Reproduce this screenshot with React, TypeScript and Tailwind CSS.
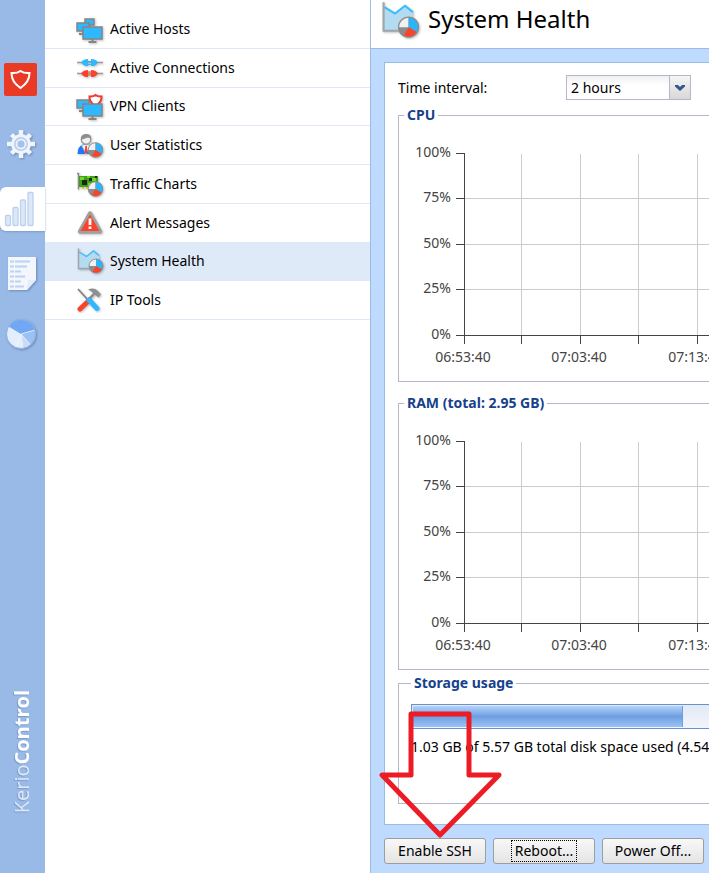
import { ReactNode } from "react";
import clsx from "clsx";

const iconClass = "h-7 w-7 shrink-0 drop-shadow-[1px_1px_1px_rgba(0,0,0,0.25)]";

function Pie({ cx, cy, r }: { cx: number; cy: number; r: number }) {
  const d = r * 0.5;
  const h = r * 0.87;
  return (
    <g>
      <circle cx={cx} cy={cy} r={r} fill="#8c8c8c" />
      <path d={`M${cx} ${cy}L${cx - r} ${cy}A${r} ${r} 0 0 1 ${cx} ${cy - r}Z`} fill="#f1f1f1" />
      <path d={`M${cx} ${cy}L${cx} ${cy - r}A${r} ${r} 0 0 1 ${cx + h} ${cy + d}Z`} fill="#2ab5fb" />
      <path d={`M${cx} ${cy}L${cx + h} ${cy + d}A${r} ${r} 0 0 1 ${cx - d} ${cy + h}Z`} fill="#fb432c" />
      <circle cx={cx} cy={cy} r={r} fill="none" stroke="#8c8c8c" strokeWidth="0.9" />
    </g>
  );
}

function Monitor({ x, y, w, h }: { x: number; y: number; w: number; h: number }) {
  return (
    <g>
      <path d={`M${x + w / 2} ${y + h}v3m-4 0h8`} stroke="#858585" strokeWidth="2" />
      <rect x={x} y={y} width={w} height={h} fill="#2db8ff" stroke="#858585" strokeWidth="1.5" />
    </g>
  );
}

function HostsIcon() {
  return (
    <svg viewBox="0 0 28 28" className={iconClass}>
      <Monitor x={9} y={4} w={9} h={6} />
      <Monitor x={1} y={8} w={12} h={8} />
      <Monitor x={7} y={12} w={19} h={12} />
    </svg>
  );
}

function ConnectionsIcon() {
  return (
    <svg viewBox="0 0 28 28" className={iconClass}>
      <path d="M1 8.500H27M1 19.500H27" stroke="#9a9a9a" strokeWidth="1.5" />
      <path d="M5 8.500C7 5.500 9 5 12 5V12C9 12 7 11.500 5 8.500ZM22 8.500C20 5.500 18 5 15 5V12C18 12 20 11.500 22 8.500Z" fill="#2db8ff" />
      <path d="M5 19.500C7 16.500 9 16 12 16V23C9 23 7 22.500 5 19.500ZM22 19.500C20 16.500 18 16 15 16V23C18 23 20 22.500 22 19.500Z" fill="#fb432c" />
      <path d="M12 7.500h3m-3 3h3" stroke="#2db8ff" />
      <path d="M12 18h3m-3 3h3" stroke="#fb432c" />
    </svg>
  );
}

function VpnIcon() {
  return (
    <svg viewBox="0 0 28 28" className={iconClass}>
      <Monitor x={1} y={8} w={12} h={8} />
      <path d="M13.500 4.500Q17 5 19.500 3Q22 5 25.500 4.500Q26 10 19.500 14Q13 10 13.500 4.500Z" fill="#fff" stroke="#ee3b2e" strokeWidth="2" />
      <Monitor x={7} y={12} w={19} h={12} />
    </svg>
  );
}

function UserIcon() {
  return (
    <svg viewBox="0 0 28 28" className={iconClass}>
      <path d="M1.500 23Q1.500 15 7 13.500H12Q17 15 18 23Z" fill="#1f78fa" />
      <path d="M5.500 14L10 23L14 14Z" fill="#f4f6fa" stroke="#a9b6c8" strokeWidth="0.7" />
      <path d="M9.300 15h1.600l0.600 7h-3z" fill="#fb432c" />
      <circle cx="10" cy="8.500" r="4.700" fill="#f1f1f1" stroke="#999" strokeWidth="1.300" />
      <path d="M5 9Q4 3.500 10 3T15 9Q14 6.500 12 6.500Q8 7.500 5 9Z" fill="#8f8f8f" />
      <Pie cx={19.500} cy={19} r={7.300} />
    </svg>
  );
}

function TrafficIcon() {
  return (
    <svg viewBox="0 0 28 28" className={iconClass}>
      <path d="M1 3.500h1.500v16" fill="none" stroke="#8a8a8a" strokeWidth="1.5" />
      <path d="M3 6H22V17H3Z" fill="#3f9f1a" />
      <path d="M4 7h4v3H4zM11 6h3v2h-3zM16 8h4v3h-4zM12 13h4v3h-4z" fill="#74d622" />
      <path d="M6 10h5v5H6zM13 8h3v3h-3zM19 6h2v2h-2z" fill="#132b10" />
      <path d="M6 17h2v2H6zm4 0h2v2h-2z" fill="#ddc52f" />
      <Pie cx={19.500} cy={19} r={7.300} />
    </svg>
  );
}

function AlertIcon() {
  return (
    <svg viewBox="0 0 28 28" className={iconClass}>
      <path d="M14 4.500L24 22.500H4Z" fill="#fb432c" stroke="#a0a0a0" strokeWidth="4.500" strokeLinejoin="round" />
      <path d="M14 5.500L23.500 22H4.500Z" fill="#fb432c" />
      <path d="M14 9.500V16M14 17.500v2.500" stroke="#fff" strokeWidth="2.800" />
    </svg>
  );
}

function HealthIcon({ className = iconClass }: { className?: string }) {
  return (
    <svg viewBox="0 0 28 28" className={className}>
      <path d="M3 5L10.500 9.500L17.500 4L23 8.500V21.500H3Z" fill="#b3dbf1" />
      <path d="M3 5L10.500 9.500L17.500 4L23 8.500" fill="none" stroke="#39bdfa" strokeWidth="1.400" />
      <path d="M2.500 1.500V21.500H17" fill="none" stroke="#a0a5aa" strokeWidth="1.500" />
      <Pie cx={20} cy={19} r={7} />
    </svg>
  );
}

function ToolsIcon() {
  return (
    <svg viewBox="0 0 28 28" className={iconClass}>
      <path d="M2 3L12 14" stroke="#808080" strokeWidth="1.700" />
      <path d="M19 7L12 14" stroke="#909090" strokeWidth="2.500" />
      <path d="M12 3.500Q18 1 22 5L25 8.500L22.500 11.500L18 8Q16 5 12 3.500Z" fill="#8f8f8f" />
      <path d="M13.500 14L4 23" stroke="#fb432c" strokeWidth="5" strokeLinecap="round" />
      <path d="M13 14L21 22.500" stroke="#2db8ff" strokeWidth="5" strokeLinecap="round" />
    </svg>
  );
}

const menu: { label: string; icon: ReactNode; active?: boolean }[] = [
  { label: "Active Hosts", icon: <HostsIcon /> },
  { label: "Active Connections", icon: <ConnectionsIcon /> },
  { label: "VPN Clients", icon: <VpnIcon /> },
  { label: "User Statistics", icon: <UserIcon /> },
  { label: "Traffic Charts", icon: <TrafficIcon /> },
  { label: "Alert Messages", icon: <AlertIcon /> },
  { label: "System Health", icon: <HealthIcon />, active: true },
  { label: "IP Tools", icon: <ToolsIcon /> },
];

const railShadow = "drop-shadow-[1px_1px_1px_rgba(60,90,140,0.5)]";

function Rail() {
  return (
    <aside className="flex w-[45px] shrink-0 flex-col bg-[#99bae7] pt-[47px]">
      <a href="#dashboard" aria-label="Dashboard" className="flex h-[65px] items-center pl-1">
        <svg viewBox="0 0 33 33" className="h-[33px] w-[33px]">
          <rect width="33" height="33" rx="2" fill="#e93a26" />
          <path d="M7.500 10Q13 10.500 16.500 8Q20 10.500 25.500 10Q25.500 19 16.500 25Q7.500 19 7.500 10Z" fill="none" stroke="#fff" strokeWidth="2" />
        </svg>
      </a>
      <a href="#configuration" aria-label="Configuration" className="flex h-16 items-center pl-1.5">
        <svg viewBox="0 0 30 30" className={clsx("h-[30px] w-[30px]", railShadow)}>
          <g stroke="#f0f5fc" strokeWidth="4.500">
            <path d="M15 1V8M15 22V29M1 15H8M22 15H29" />
            <path d="M5.500 5.500L10 10M20 20L24.500 24.500M24.500 5.500L20 10M10 20L5.500 24.500" />
          </g>
          <circle cx="15" cy="15" r="8.500" fill="#b4cdf0" stroke="#f0f5fc" strokeWidth="3" />
          <circle cx="15" cy="15" r="4.500" fill="#a3c1ea" stroke="#e6effb" strokeWidth="2" />
        </svg>
      </a>
      <a href="#status" aria-label="Status" className="flex h-[66px] items-center">
        <span className="flex h-11 w-full items-center rounded-l-md bg-white pl-1 shadow-[0_1px_2px_#7e9bc7]">
          <svg viewBox="0 0 32 36" className="h-9 w-8" fill="#dce8fa" stroke="#bdd0ec" strokeWidth="1.300">
            <rect x="1.500" y="24.500" width="5" height="10" rx="1" />
            <rect x="9" y="16.500" width="5" height="18" rx="1" />
            <rect x="16.500" y="9" width="5" height="25.500" rx="1" />
            <rect x="24" y="1.500" width="5" height="33" rx="1" />
          </svg>
        </span>
      </a>
      <a href="#logs" aria-label="Logs" className="flex h-[64px] items-center pl-[7px]">
        <svg viewBox="0 0 30 36" className={clsx("h-9 w-[30px]", railShadow)}>
          <path d="M1 1H29V24L20 34H1Z" fill="#f3f7fd" />
          <path d="M29 24H21Q21 29 20 34Z" fill="#e4edf9" />
          <path d="M3 5.500h4M3 10.500h4M3 15.500h4M3 20.500h4M3 25.500h4M3 30.500h4M8 5.500h15M8 10.500h12M8 15.500h6M8 20.500h10M8 25.500h6M8 30.500h9" stroke="#bcd2f0" strokeWidth="2" />
        </svg>
      </a>
      <a href="#accounting" aria-label="Accounting" className="flex h-14 items-center pl-[5px]">
        <svg viewBox="0 0 32 32" className={clsx("h-8 w-8", railShadow)}>
          <circle cx="16" cy="16" r="14.500" fill="#e4edfb" />
          <path d="M16 16L3.500 8.500A14.500 14.500 0 0 1 30 12Z" fill="#70a8f3" />
          <path d="M16 16L30 12A14.500 14.500 0 0 1 25.500 27Z" fill="#9cc1f4" />
          <path d="M16 16L25.500 27A14.500 14.500 0 0 1 18 30.500Z" fill="#c8dcf8" />
          <path d="M16 16L30 12M16 16L25.500 27M16 16L18 30.500M16 16L11 29.500" stroke="#f2f7fe" strokeWidth="0.7" />
          <circle cx="16" cy="16" r="14.500" fill="none" stroke="#8db2e5" />
        </svg>
      </a>
      <div className="mt-auto mb-16 ml-2 rotate-180 self-start font-['Open_Sans',sans-serif] text-[20px] leading-7 text-[#dfe9f8] [text-shadow:-1px_-1px_1px_#7e9bc7] [writing-mode:vertical-rl]">
        Kerio<span className="font-bold text-white">Control</span>
      </div>
    </aside>
  );
}

const percents = ["100%", "75%", "50%", "25%", "0%"];
const times = ["06:53:40", "07:03:40", "07:13:40", "07:23:40"];
const rowY = [28, 73, 119, 164, 210];
const colX = [65, 122, 181, 239, 298, 356, 414];

function UsageChart() {
  return (
    <svg className="block h-64 w-full" fontSize="14" fill="#444">
      {rowY.slice(1, 4).map((y) => (
        <path key={y} d={`M65 ${y + 0.5}H440`} stroke="#ccc" />
      ))}
      {colX.slice(1).map((x) => (
        <path key={x} d={`M${x + 0.5} 29V210`} stroke="#ccc" />
      ))}
      <path d="M65.500 28V219M57 210.500H440" stroke="#444" />
      {rowY.map((y) => (
        <path key={y} d={`M57 ${y + 0.5}H65`} stroke="#444" />
      ))}
      {colX.map((x) => (
        <path key={x} d={`M${x + 0.5} 210V219`} stroke="#444" />
      ))}
      {percents.map((label, i) => (
        <text key={label} x="52" y={rowY[i] + 4} textAnchor="end">
          {label}
        </text>
      ))}
      {times.map((label, i) => (
        <text key={label} x={colX[i * 2] - 1} y="237" textAnchor="middle">
          {label}
        </text>
      ))}
    </svg>
  );
}

function Group({ title, className, children }: { title: string; className?: string; children: ReactNode }) {
  return (
    <fieldset className={clsx("border border-[#b5b8c8]", className)}>
      <legend className="px-[3px] text-[14px] leading-5 font-bold text-[#15428b]">{title}</legend>
      {children}
    </fieldset>
  );
}

function ActionButton({ label, focused }: { label: string; focused?: boolean }) {
  return (
    <button
      type="button"
      className="flex h-[26px] w-[102px] items-center justify-center rounded-[3px] border border-[#9d9d9d] bg-linear-to-b from-[#f8f8f8] to-[#e4e4e4] text-[14px] leading-5"
    >
      <span className={clsx("border border-dotted px-[3px]", focused ? "border-black" : "border-transparent")}>
        {label}
      </span>
    </button>
  );
}

export default function App() {
  return (
    <div className="flex min-h-screen overflow-hidden bg-white font-['Noto_Sans',sans-serif] text-[14px] leading-5 text-black">
      <Rail />
      <nav className="w-[325px] shrink-0 pt-[10px]">
        <ul className="flex h-[310px] flex-col">
          {menu.map((item) => (
            <li key={item.label} className={clsx("flex-1 border-b border-[#dfe8f6]", item.active && "bg-[#dfeaf8]")}>
              <a href="#" className="flex h-full items-center gap-1.5 pl-[31px]">
                {item.icon}
                {item.label}
              </a>
            </li>
          ))}
        </ul>
      </nav>

      <main className="min-w-0 flex-1 overflow-hidden border-l border-[#99bbe8] bg-[#bfdaff]">
        <header className="flex h-[49px] items-start gap-2 border-b border-[#99bbe8] bg-white pl-[9px]">
          <HealthIcon className="h-10 w-10 shrink-0 drop-shadow-[1px_1px_1px_rgba(0,0,0,0.25)]" />
          <h1 className="text-[24px] leading-[38px]">System Health</h1>
        </header>

        <div className="relative min-w-[480px] px-[13px] pt-[13px]">
          <section className="border border-[#99bbe8] bg-white px-[13px] pt-3 pb-5">
            <div className="flex h-[25px] items-center">
              <label htmlFor="interval" className="w-[168px]">
                Time interval:
              </label>
              <div className="relative">
                <select
                  id="interval"
                  className="block h-[25px] w-[125px] appearance-none border border-[#b5b8c8] bg-linear-to-b from-[#eef0f0] to-white to-40% pl-1"
                >
                  <option>2 hours</option>
                </select>
                <span className="pointer-events-none absolute inset-y-0 right-0 flex w-[22px] items-center justify-center border border-[#b5b8c8] bg-linear-to-b from-[#f5f5f5] to-[#d8d8d8]">
                  <svg viewBox="0 0 12 8" className="h-2 w-3">
                    <path d="M1 1H4L6 3L8 1H11V2.500L6 7L1 2.500Z" fill="#34558f" />
                  </svg>
                </span>
              </div>
            </div>

            <Group title="CPU" className="mt-[5px] [&>legend]:ml-[5px]">
              <UsageChart />
            </Group>
            <Group title="RAM (total: 2.95 GB)" className="mt-[11px] [&>legend]:ml-[5px]">
              <UsageChart />
            </Group>
            <Group title="Storage usage" className="mt-[3px] px-3 pb-[46px]">
              <div
                role="progressbar"
                aria-label="Storage usage"
                aria-valuenow={68}
                className="mt-[11px] h-[25px] border border-[#6593cf] bg-linear-to-b from-[#e3eaf4] to-[#f2f5fb] p-px"
              >
                <div className="h-full w-[270px] border-r border-[#6f9ee0] bg-linear-to-b from-[#b3d2fb] via-[#6d9fe0] via-50% to-[#9cc3f6]" />
              </div>
              <p className="mt-2 whitespace-nowrap">1.03 GB of 5.57 GB total disk space used (4.54 GB free)</p>
            </Group>
          </section>

          <div className="flex gap-[7px] py-[13px]">
            <ActionButton label="Enable SSH" />
            <ActionButton label="Reboot..." focused />
            <ActionButton label="Power Off..." />
          </div>

          {/* pointer to the SSH button */}
          <svg viewBox="0 0 126 130" className="pointer-events-none absolute bottom-[38px] left-[7px] h-[130px] w-[126px]">
            <path d="M33 5H91V66H121L62 126L4 66H33Z" fill="none" stroke="#ed1c24" strokeWidth="5" strokeLinejoin="round" />
          </svg>
        </div>
      </main>
    </div>
  );
}
